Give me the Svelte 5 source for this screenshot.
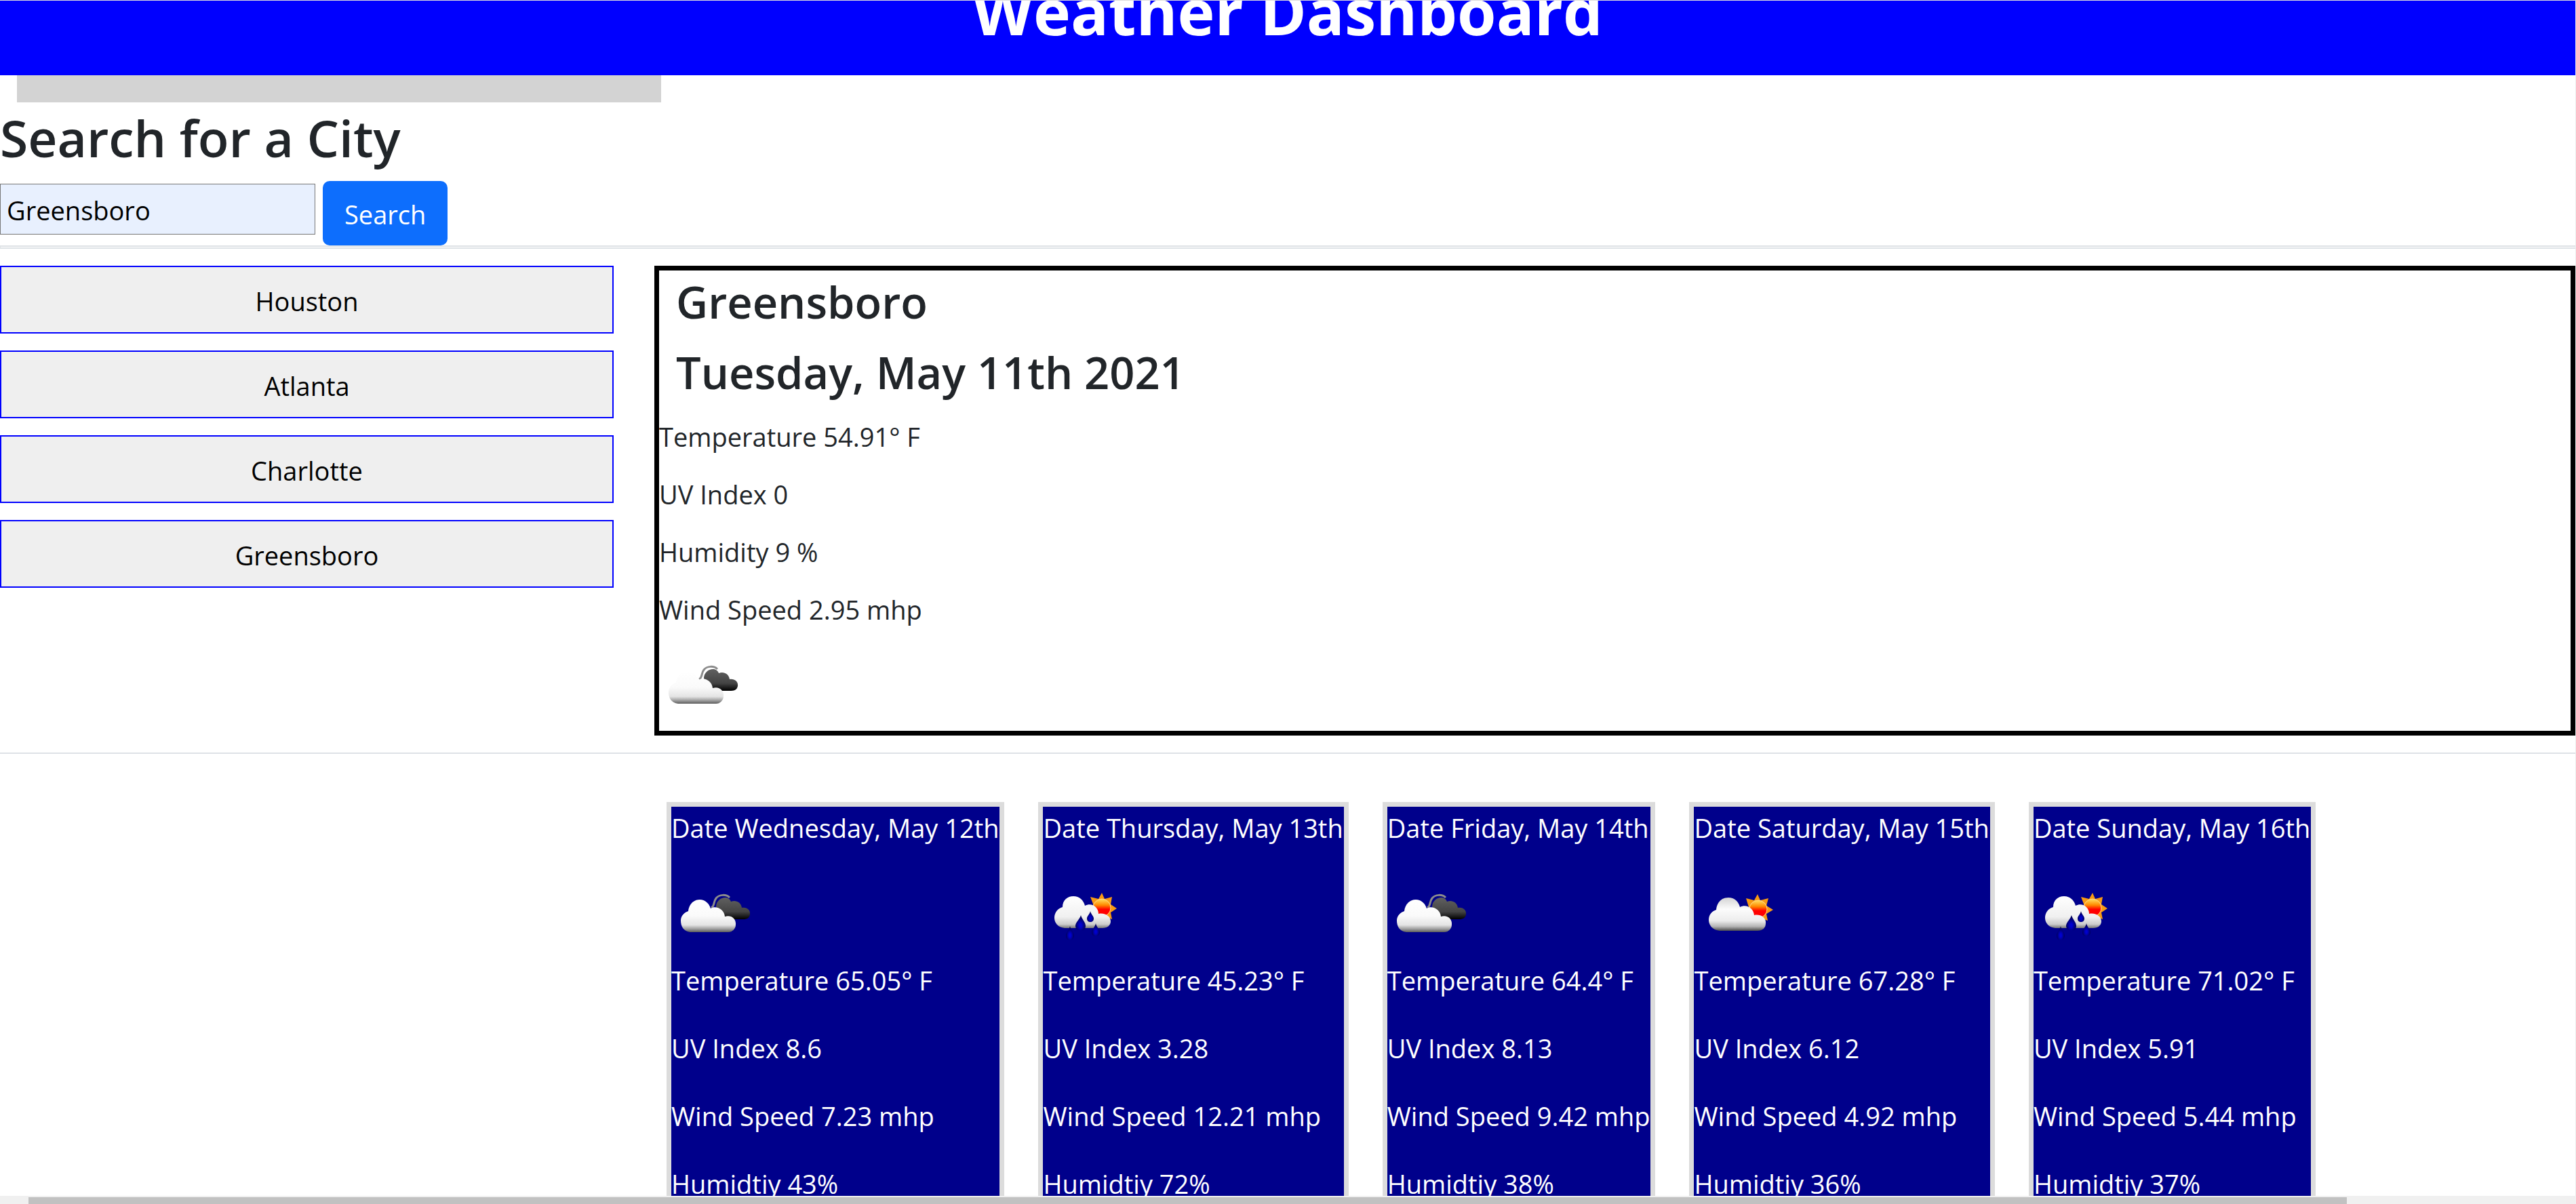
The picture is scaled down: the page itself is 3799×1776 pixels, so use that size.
<script lang="ts">
  let city = $state('Greensboro');

  const history = ['Houston', 'Atlanta', 'Charlotte', 'Greensboro'];

  const forecast = [
    { date: 'Wednesday, May 12th', icon: 'clouds', temp: '65.05', uv: '8.6', wind: '7.23', humidity: 43 },
    { date: 'Thursday, May 13th', icon: 'rain', temp: '45.23', uv: '3.28', wind: '12.21', humidity: 72 },
    { date: 'Friday, May 14th', icon: 'clouds', temp: '64.4', uv: '8.13', wind: '9.42', humidity: 38 },
    { date: 'Saturday, May 15th', icon: 'sun', temp: '67.28', uv: '6.12', wind: '4.92', humidity: 36 },
    { date: 'Sunday, May 16th', icon: 'rain', temp: '71.02', uv: '5.91', wind: '5.44', humidity: 37 },
  ];
</script>

<svg class="defs" aria-hidden="true">
  <defs>
    <linearGradient id="cloudFill" x1="0" y1="0" x2="0" y2="1">
      <stop offset="0" stop-color="#ffffff" />
      <stop offset="0.5" stop-color="#fafafa" />
      <stop offset="0.78" stop-color="#e4e4e4" />
      <stop offset="0.9" stop-color="#a0a0a0" />
      <stop offset="1" stop-color="#5c5c5c" />
    </linearGradient>
    <linearGradient id="rainFill" x1="0" y1="0" x2="0" y2="1">
      <stop offset="0" stop-color="#ffffff" />
      <stop offset="0.65" stop-color="#f0f0f0" />
      <stop offset="0.88" stop-color="#cccccc" />
      <stop offset="1" stop-color="#777777" />
    </linearGradient>
    <linearGradient id="sunnyFill" x1="0" y1="0" x2="0" y2="1">
      <stop offset="0" stop-color="#d4d4d4" />
      <stop offset="0.35" stop-color="#fcfcfc" />
      <stop offset="0.7" stop-color="#ececec" />
      <stop offset="0.87" stop-color="#b4b4b4" />
      <stop offset="1" stop-color="#4c4c4c" />
    </linearGradient>
    <linearGradient id="darkFill" x1="0" y1="0" x2="0" y2="1">
      <stop offset="0" stop-color="#606060" />
      <stop offset="0.65" stop-color="#444444" />
      <stop offset="1" stop-color="#000000" />
    </linearGradient>
    <linearGradient id="sunFill" x1="0" y1="0" x2="0" y2="1">
      <stop offset="0" stop-color="#ffe060" />
      <stop offset="0.35" stop-color="#ff8a00" />
      <stop offset="0.6" stop-color="#ff0000" />
    </linearGradient>
    <radialGradient id="dropFill" cx="0.5" cy="0.65" r="0.5">
      <stop offset="0.2" stop-color="#0000d0" />
      <stop offset="1" stop-color="#00005a" />
    </radialGradient>
    <symbol id="clouds" viewBox="0 0 125 125">
      <path d="M59 49C64 47 62 40 66 35C71 29 81 29 86 34" fill="none" stroke="#8c8c8c" stroke-width="3" />
      <path d="M66 48C66 34 84 29 88 40C94 37 103 40 104 49C112 48 117 53 116 59C115 64 112 66 106 66H80Z" fill="url(#darkFill)" />
      <path d="M28 85C18 84 14 76 14 68C14 61 19 56 25 54C26 44 33 37 42 37C50 37 56 43 58 50C66 45 78 51 79 62C88 59 96 65 95 74C95 80 90 85 84 85Z" fill="url(#cloudFill)" />
    </symbol>
    <symbol id="rain" viewBox="0 0 125 125">
      <path d="M87 27L91 36L102 33L100 44L109 50L100 56L102 66L92 62L80 60L75 46L70 33L82 36Z" fill="#f79a12" />
      <circle cx="87" cy="49" r="13" fill="url(#sunFill)" stroke="#ffd98c" stroke-width="1" />
      <path d="M32 79C22 78 17 71 17 64C17 56 22 50 29 48C29 38 36 32 45 32C54 32 60 38 62 46C72 41 82 48 82 58C92 56 100 62 100 69C100 75 95 79 88 79Z" fill="url(#rainFill)" />
      <path d="M56 60C58 67 63 70 63 76C63 80 60 83 56 83C52 83 48 80 48 76C48 70 54 67 56 60Z" fill="url(#dropFill)" />
      <path d="M70 54C71 59 75 61 75 65C75 68 73 70 70 70C67 70 65 68 65 65C65 61 69 59 70 54Z" fill="url(#dropFill)" />
      <path d="M40 76C41 82 46 85 46 90C46 94 43 97 40 97C36 97 34 94 34 90C34 85 39 82 40 76Z" fill="url(#dropFill)" />
      <path d="M78 72C79 78 84 80 84 85C84 89 81 91 78 91C74 91 72 89 72 85C72 80 77 78 78 72Z" fill="url(#dropFill)" />
    </symbol>
    <symbol id="sun" viewBox="0 0 125 125">
      <path d="M94 29L98 38L110 35L107 46L117 52L107 58L109 68L98 64L86 62L81 48L77 35L89 38Z" fill="#f79a12" />
      <circle cx="95" cy="51" r="13" fill="url(#sunFill)" stroke="#ffd98c" stroke-width="1" />
      <path d="M38 83C28 82 22 75 22 67C22 59 27 54 33 52C34 41 41 34 51 34C60 34 66 40 68 48C77 43 88 49 89 60C99 58 107 64 106 72C106 79 101 83 94 83Z" fill="url(#sunnyFill)" />
    </symbol>
  </defs>
</svg>

<div class="page">
  <header class="banner"><h1>Weather Dashboard</h1></header>
  <div class="strip"></div>

  <form class="search" onsubmit={(e) => e.preventDefault()}>
    <h2><label for="city">Search for a City</label></h2>
    <div class="search-row">
      <input id="city" type="text" bind:value={city} />
      <button class="primary" type="submit">Search</button>
    </div>
  </form>
  <div class="divider"></div>

  <div class="columns">
    <nav class="history" aria-label="Recent cities">
      {#each history as name}
        <button type="button" onclick={() => (city = name)}>{name}</button>
      {/each}
    </nav>
    <section class="current">
      <h3>Greensboro</h3>
      <h3>Tuesday, May 11th 2021</h3>
      <p>Temperature 54.91° F</p>
      <p>UV Index 0</p>
      <p>Humidity 9 %</p>
      <p>Wind Speed 2.95 mhp</p>
      <svg class="icon" role="img" aria-label="Broken clouds"><use href="#clouds" /></svg>
    </section>
  </div>

  <section class="forecast">
    {#each forecast as day}
      <article class="card">
        <p>Date {day.date}</p>
        <svg class="icon" role="img" aria-label={day.icon}><use href="#{day.icon}" /></svg>
        <p>Temperature {day.temp}° F</p>
        <p>UV Index {day.uv}</p>
        <p>Wind Speed {day.wind} mhp</p>
        <p>Humidtiy {day.humidity}%</p>
      </article>
    {/each}
  </section>

  <div class="v-track"></div>
  <div class="h-track"><div class="thumb"></div></div>
</div>

<style>
  :global(body) {
    margin: 0;
    background: #fff;
  }
  .defs {
    position: absolute;
    width: 0;
    height: 0;
  }
  .page,
  .page button,
  .page input {
    font-family: 'Open Sans', 'Noto Sans', sans-serif;
    font-size: 38px;
    line-height: 60px;
  }
  .page {
    position: relative;
    box-sizing: border-box;
    height: 100vh;
    overflow: hidden;
    padding-right: 1px;
    border-top: 1px solid #dcdcdc;
    color: #212529;
  }
  h1,
  h2,
  h3,
  p {
    margin: 0;
  }
  p {
    line-height: 62px;
  }
  .banner {
    overflow: hidden;
    padding-bottom: 35px;
    background: #00f;
    color: #fff;
    text-align: center;
  }
  h1 {
    margin-top: -45px;
    font-size: 93px;
    font-weight: 700;
    line-height: 120px;
  }
  .strip {
    width: 25%;
    height: 40px;
    margin-left: 25px;
    background: #d3d3d3;
  }
  h2 {
    font-size: 75px;
    font-weight: 600;
    line-height: 96px;
  }
  .search {
    padding-top: 4px;
  }
  .search-row {
    display: flex;
    align-items: flex-start;
    gap: 11px;
    margin-top: 16px;
  }
  input {
    box-sizing: border-box;
    width: 465px;
    height: 75px;
    margin: 4px 0 0;
    padding: 2px 9px 0;
    border: 1px solid #767676;
    background: #e8f0fe;
    color: #000;
  }
  .primary {
    padding: 19px 32px 16px;
    border: 0;
    border-radius: 10px;
    background: #0d6efd;
    color: #fff;
  }
  .divider {
    height: 1px;
    border: solid #dee2e6;
    border-width: 2px 0 2px 1px;
  }
  .columns {
    display: grid;
    grid-template-columns: 905px 1fr;
    gap: 60px;
    padding: 25px 0;
    border-bottom: 2px solid #dee2e6;
  }
  .history {
    display: flex;
    flex-direction: column;
    gap: 25px;
  }
  .history button {
    padding: 20px 18px 16px;
    border: 2px solid #00f;
    background: #efefef;
    color: #000;
  }
  .current {
    border: 7px solid #000;
  }
  h3 {
    padding: 4px 25px 16px;
    font-size: 65px;
    font-weight: 600;
    line-height: 84px;
  }
  .current h3 + p {
    margin-top: 6px;
  }
  .current p {
    margin-bottom: 23px;
  }
  .icon {
    display: block;
    width: 125px;
    height: 125px;
  }
  .forecast {
    display: flex;
    align-items: flex-start;
    gap: 50px;
    padding: 71px 0 0 983px;
  }
  .card {
    flex: none;
    padding-right: 1px;
    border: 7px solid #dcdcdc;
    background: #00008b;
    color: #fff;
    white-space: nowrap;
  }
  .card p {
    margin-bottom: 38px;
  }
  .v-track {
    position: absolute;
    top: 0;
    right: 0;
    bottom: 0;
    width: 1px;
    background: #ececec;
  }
  .h-track {
    position: absolute;
    right: 0;
    bottom: 0;
    left: 0;
    box-sizing: border-box;
    height: 12px;
    padding: 2px 0 0 42px;
    background: #f0f0f0;
  }
  .thumb {
    width: 91%;
    height: 10px;
    background: #c1c1c1;
  }
</style>
